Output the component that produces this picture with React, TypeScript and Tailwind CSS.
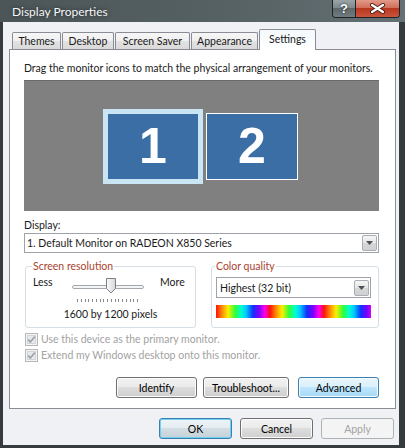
import React from "react";

const tabs = [
  { label: "Themes", w: "w-[49px]" },
  { label: "Desktop", w: "w-[52px]" },
  { label: "Screen Saver", w: "w-[75px]" },
  { label: "Appearance", w: "w-[67px]" },
];

function Button({ children, className = "", kind = "normal" }: { children: React.ReactNode; className?: string; kind?: "normal" | "hot" | "default" | "disabled" }) {
  const look = {
    normal:
      "border-[#707070] bg-[image:linear-gradient(#f2f2f2,#ebebeb_45%,#dddddd_50%,#cfcfcf)] shadow-[inset_0_0_0_1px_#fbfbfb] text-black",
    hot: "border-[#3c7fb1] bg-[image:linear-gradient(#eaf6fd,#d9f0fc_45%,#bee6fd_50%,#a7d9f5)] shadow-[inset_0_0_0_1px_#f4fbfe] text-black",
    default:
      "border-[#3c7fb1] bg-[image:linear-gradient(#eef4f7,#e5edf1_45%,#d3dde3_50%,#c6d2d8)] shadow-[inset_0_0_0_1px_#6fd0ef] text-black",
    disabled: "border-[#adb2b5] bg-[#f4f4f4] text-[#a3a3a3]",
  }[kind];
  return (
    <div className={`h-[21px] rounded-[3px] border flex items-center justify-center ${look} ${className}`}>
      {children}
    </div>
  );
}

function DropArrow() {
  return (
    <div className="w-[15px] h-[16px] rounded-[2px] border border-[#a7aeb5] bg-[image:linear-gradient(#f5f5f5,#e6e6e6_50%,#d6d6d6_50%,#cfd1d3)] flex items-center justify-center">
      <svg width="7" height="4" viewBox="0 0 7 4">
        <path d="M0 0h7L3.5 4z" fill="#4d5256" />
      </svg>
    </div>
  );
}

function Check({ label }: { label: string }) {
  return (
    <div className="h-[16px] flex items-center gap-[3px] pl-[1px] text-[#a2a2a2]">
      <svg width="13" height="13" viewBox="0 0 13 13">
        <rect x="0.5" y="0.5" width="12" height="12" fill="#f3f4f5" stroke="#b6b9bc" />
        <rect x="2.5" y="2.5" width="8" height="8" fill="#e7e9eb" stroke="#d2d5d8" />
        <path d="M3 6.5l2.3 2.5L10 3.5" fill="none" stroke="#9da2a6" strokeWidth="1.8" />
      </svg>
      <span>{label}</span>
    </div>
  );
}

function Slider() {
  const ticks = Array.from({ length: 17 }, (_, i) => Math.round(5 + i * 3.75));
  return (
    <svg width="72" height="26" viewBox="0 0 72 26" className="mt-[2px]">
      <rect x="0.5" y="8.5" width="71" height="3" rx="1.5" fill="#f2f4f5" stroke="#a3a8ad" />
      {ticks.map((x) => (
        <rect key={x} x={x} y="22" width="1" height="3" fill="#8a8a8a" />
      ))}
      <defs>
        <linearGradient id="th" x1="0" x2="1" y1="0" y2="0">
          <stop offset="0" stopColor="#fbfbfb" />
          <stop offset="1" stopColor="#d4d7da" />
        </linearGradient>
      </defs>
      <path d="M34.5 1.5h9v10l-4.5 4.5-4.5-4.5z" fill="url(#th)" stroke="#7a8086" />
    </svg>
  );
}

export default function App() {
  return (
    <div className="w-[405px] h-[448px] flex flex-col bg-[#343c3f] font-['Lato',sans-serif] text-[10.5px] leading-[14px] text-[#1a1a1a]">
      {/* title bar */}
      <div className="h-[22px] flex items-start bg-[image:linear-gradient(90deg,#4c5659,#566164_55%,#647073)]">
        <span className="pl-[12px] pt-[4px] text-[12px] leading-[16px] text-[#f3f5f5] [text-shadow:0_0_4px_rgba(0,0,0,0.6)]">
          Display Properties
        </span>
        <div className="ml-auto mr-[5px] flex h-[18px] rounded-b-[4px] border border-t-0 border-[#1d2224] overflow-hidden">
          <div className="w-[22px] flex items-center justify-center bg-[image:linear-gradient(#9aa4a7,#7c878a_50%,#5d686b_50%,#6f7b7e)] text-white font-bold text-[13px] leading-none [text-shadow:0_0_2px_#000] font-['Liberation_Sans',sans-serif]">
            ?
          </div>
          <div className="w-[44px] border-l border-[#1d2224] flex items-center justify-center bg-[image:linear-gradient(#e39a8a,#cf6a55_50%,#b8361e_50%,#c9553c)]">
            <svg width="15" height="11" viewBox="0 0 15 11">
              <path d="M2 2l11 7M13 2L2 9" stroke="#4a1a10" strokeWidth="4" strokeLinecap="round" />
              <path d="M2 2l11 7M13 2L2 9" stroke="#ffffff" strokeWidth="2.3" strokeLinecap="round" />
            </svg>
          </div>
        </div>
      </div>

      {/* client area */}
      <div className="flex-1 ml-[3px] mr-[6px] mb-[3px] bg-[#eff1f4] flex flex-col">
        <div className="mt-[7px] ml-[6px] w-[387px]">
          <div className="h-[20px] flex items-end gap-[1px] pl-[3px]">
            {tabs.map((t) => (
              <div
                key={t.label}
                className={`${t.w} h-[17px] rounded-t-[2px] border border-b-0 border-[#898c95] bg-[image:linear-gradient(#f6f6f6,#efefef_50%,#e3e3e3_50%,#d9d9d9)] flex items-center justify-center`}
              >
                {t.label}
              </div>
            ))}
            <div className="w-[57px] h-[21px] -mb-px relative z-10 rounded-t-[2px] border border-b-0 border-[#898c95] bg-[image:linear-gradient(#f4f9fc,#ffffff)] flex items-center justify-center pb-[2px]">
              Settings
            </div>
          </div>

          <div className="h-[360px] border border-[#898c95] bg-white pl-[14px] flex flex-col">
            <div className="mt-[11px]">Drag the monitor icons to match the physical arrangement of your monitors.</div>

            <div className="mt-[5px] w-[355px] h-[131px] bg-[#808080] border-t border-[#6a6a6a] flex items-center pl-[79px] gap-[3px] font-['Liberation_Sans',sans-serif] font-bold text-[50px] leading-none text-white">
              <div className="w-[100px] h-[75px] border-[5px] border-[#c9e4f3] bg-[#3a6ea5] flex items-center justify-center">1</div>
              <div className="w-[92px] h-[67px] border border-white bg-[#3a6ea5] flex items-center justify-center">2</div>
            </div>

            <div className="mt-[7px]">Display:</div>
            <div className="mt-[1px] w-[355px] h-[20px] border border-[#9da3a8] flex items-center justify-between pl-[2px] pr-[1px]">
              <span>1. Default Monitor on RADEON X850 Series</span>
              <DropArrow />
            </div>

            <div className="mt-[6px] flex gap-[15px] pl-[1px]">
              <fieldset className="w-[171px] h-[69px] border border-[#d5dfe5] rounded-[3px]">
                <legend className="ml-[6px] px-[1px] text-[#a9432e]">Screen resolution</legend>
                <div className="mt-[2px] flex items-start pl-[7px]">
                  <span className="w-[39px]">Less</span>
                  <Slider />
                  <span className="ml-[16px]">More</span>
                </div>
                <div className="mt-[4px] text-center">1600 by 1200 pixels</div>
              </fieldset>
              <fieldset className="w-[168px] h-[69px] border border-[#d5dfe5] rounded-[3px]">
                <legend className="ml-[3px] px-[1px] text-[#a9432e]">Color quality</legend>
                <div className="mt-[4px] ml-[4px] w-[155px] h-[21px] border border-[#9da3a8] flex items-center justify-between pl-[3px] pr-[1px]">
                  <span>Highest (32 bit)</span>
                  <DropArrow />
                </div>
                <div className="mt-[7px] ml-[4px] w-[155px] h-[13px] bg-[image:repeating-linear-gradient(90deg,#ff1010_0px,#ff8a00_6px,#ffee00_12px,#33ff33_19px,#00ffcc_25px,#00ccff_30px,#1030ff_37px,#7a00ff_43px,#ff00ee_49px,#ff1010_54px)]" />
              </fieldset>
            </div>

            <div className="mt-[3px]">
              <Check label="Use this device as the primary monitor." />
              <Check label="Extend my Windows desktop onto this monitor." />
            </div>

            <div className="mt-[14px] w-[355px] flex justify-end">
              <Button className="w-[81px] mr-[6px]">Identify</Button>
              <Button className="w-[86px] mr-[9px]">Troubleshoot...</Button>
              <Button className="w-[81px]" kind="hot">Advanced</Button>
            </div>
          </div>
        </div>

        <div className="mt-[9px] flex justify-end gap-[8px] pr-[5px]">
          <Button className="w-[73px]" kind="default">OK</Button>
          <Button className="w-[73px]">Cancel</Button>
          <Button className="w-[73px]" kind="disabled">Apply</Button>
        </div>
      </div>
    </div>
  );
}
